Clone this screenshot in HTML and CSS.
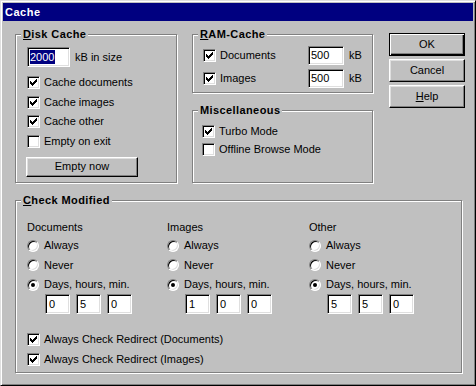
FILE: index.html
```html
<!DOCTYPE html>
<html lang="en">

<head>
    <meta charset="UTF-8">
    <title>Cache</title>
    <link rel="stylesheet" href="styles.css">
</head>

<body>
    <div class="window">
        <div class="titlebar">Cache</div>
        <div class="client">
            <div class="top">
                <div class="group disk">
                    <div class="group-title"><u>D</u>isk Cache</div>
                    <div class="disk-body">
                        <div class="size-row">
                            <div class="field size"><span class="selected">2000</span></div>
                            <span>kB in size</span>
                        </div>
                        <div class="checks">
                            <div class="check"><span class="box"><svg class="tick" viewBox="0 0 7 7"><path d="M6 0h1v1H6zM5 1h2v1H5zM0 2h1v1H0zM4 2h3v1H4zM0 3h2v1H0zM3 3h3v1H3zM0 4h5v1H0zM1 5h3v1H1zM2 6h1v1H2z"/></svg></span>Cache documents</div>
                            <div class="check"><span class="box"><svg class="tick" viewBox="0 0 7 7"><path d="M6 0h1v1H6zM5 1h2v1H5zM0 2h1v1H0zM4 2h3v1H4zM0 3h2v1H0zM3 3h3v1H3zM0 4h5v1H0zM1 5h3v1H1zM2 6h1v1H2z"/></svg></span>Cache images</div>
                            <div class="check"><span class="box"><svg class="tick" viewBox="0 0 7 7"><path d="M6 0h1v1H6zM5 1h2v1H5zM0 2h1v1H0zM4 2h3v1H4zM0 3h2v1H0zM3 3h3v1H3zM0 4h5v1H0zM1 5h3v1H1zM2 6h1v1H2z"/></svg></span>Cache other</div>
                            <div class="check"><span class="box"></span>Empty on exit</div>
                        </div>
                        <div class="btn empty">Empty now</div>
                    </div>
                </div>

                <div class="middle">
                    <div class="group ram">
                        <div class="group-title"><u>R</u>AM-Cache</div>
                        <div class="ram-body">
                            <div class="ram-row">
                                <div class="check ram-label"><span class="box"><svg class="tick" viewBox="0 0 7 7"><path d="M6 0h1v1H6zM5 1h2v1H5zM0 2h1v1H0zM4 2h3v1H4zM0 3h2v1H0zM3 3h3v1H3zM0 4h5v1H0zM1 5h3v1H1zM2 6h1v1H2z"/></svg></span>Documents</div>
                                <div class="field amount">500</div>
                                <span>kB</span>
                            </div>
                            <div class="ram-row">
                                <div class="check ram-label"><span class="box"><svg class="tick" viewBox="0 0 7 7"><path d="M6 0h1v1H6zM5 1h2v1H5zM0 2h1v1H0zM4 2h3v1H4zM0 3h2v1H0zM3 3h3v1H3zM0 4h5v1H0zM1 5h3v1H1zM2 6h1v1H2z"/></svg></span>Images</div>
                                <div class="field amount">500</div>
                                <span>kB</span>
                            </div>
                        </div>
                    </div>

                    <div class="group misc">
                        <div class="group-title">Miscellaneous</div>
                        <div class="misc-body">
                            <div class="check"><span class="box"><svg class="tick" viewBox="0 0 7 7"><path d="M6 0h1v1H6zM5 1h2v1H5zM0 2h1v1H0zM4 2h3v1H4zM0 3h2v1H0zM3 3h3v1H3zM0 4h5v1H0zM1 5h3v1H1zM2 6h1v1H2z"/></svg></span>Turbo Mode</div>
                            <div class="check"><span class="box"></span>Offline Browse Mode</div>
                        </div>
                    </div>
                </div>

                <div class="buttons">
                    <div class="btn default">OK</div>
                    <div class="btn">Cancel</div>
                    <div class="btn"><span><u>H</u>elp</span></div>
                </div>
            </div>

            <div class="group modified">
                <div class="group-title"><u>C</u>heck Modified</div>
                <div class="modified-body">
                    <div class="columns">
                        <div class="col">
                            <div class="col-label">Documents</div>
                            <div class="radios">
                                <div class="radio-row"><span class="radio"></span>Always</div>
                                <div class="radio-row"><span class="radio"></span>Never</div>
                                <div class="radio-row"><span class="radio on"></span>Days, hours, min.</div>
                            </div>
                            <div class="times">
                                <div class="field time">0</div>
                                <div class="field time">5</div>
                                <div class="field time">0</div>
                            </div>
                        </div>
                        <div class="col">
                            <div class="col-label">Images</div>
                            <div class="radios">
                                <div class="radio-row"><span class="radio"></span>Always</div>
                                <div class="radio-row"><span class="radio"></span>Never</div>
                                <div class="radio-row"><span class="radio on"></span>Days, hours, min.</div>
                            </div>
                            <div class="times">
                                <div class="field time">1</div>
                                <div class="field time">0</div>
                                <div class="field time">0</div>
                            </div>
                        </div>
                        <div class="col">
                            <div class="col-label">Other</div>
                            <div class="radios">
                                <div class="radio-row"><span class="radio"></span>Always</div>
                                <div class="radio-row"><span class="radio"></span>Never</div>
                                <div class="radio-row"><span class="radio on"></span>Days, hours, min.</div>
                            </div>
                            <div class="times">
                                <div class="field time">5</div>
                                <div class="field time">5</div>
                                <div class="field time">0</div>
                            </div>
                        </div>
                    </div>
                    <div class="redirects">
                        <div class="check"><span class="box"><svg class="tick" viewBox="0 0 7 7"><path d="M6 0h1v1H6zM5 1h2v1H5zM0 2h1v1H0zM4 2h3v1H4zM0 3h2v1H0zM3 3h3v1H3zM0 4h5v1H0zM1 5h3v1H1zM2 6h1v1H2z"/></svg></span>Always Check Redirect (Documents)</div>
                        <div class="check"><span class="box"><svg class="tick" viewBox="0 0 7 7"><path d="M6 0h1v1H6zM5 1h2v1H5zM0 2h1v1H0zM4 2h3v1H4zM0 3h2v1H0zM3 3h3v1H3zM0 4h5v1H0zM1 5h3v1H1zM2 6h1v1H2z"/></svg></span>Always Check Redirect (Images)</div>
                    </div>
                </div>
            </div>
        </div>
    </div>
</body>

</html>
```

FILE: styles.css
```css
* {
    box-sizing: border-box;
}

body {
    margin: 0;
    font-family: "Liberation Sans", Arial, sans-serif;
    font-size: 11px;
    line-height: 13px;
    color: #000;
    background: #c0c0c0;
}

.window {
    width: 476px;
    height: 386px;
    padding: 2px;
    background: #c0c0c0;
    border: 1px solid;
    border-color: #dfdfdf #000 #000 #dfdfdf;
    box-shadow: inset 1px 1px #fff, inset -1px -1px #808080;
}

.titlebar {
    height: 18px;
    line-height: 18px;
    padding-left: 2px;
    background: #000080;
    color: #fff;
    font-weight: bold;
    letter-spacing: 0.5px;
}

.client {
    padding: 13px 0 0 12px;
}

.top {
    display: flex;
    align-items: flex-start;
}

/* etched group box */
.group {
    border: 1px solid #808080;
    box-shadow: inset 1px 1px #fff, 1px 1px #fff;
}

.group-title {
    display: table;
    height: 13px;
    margin: -7px 0 0 5px;
    padding: 0 2px;
    background: #c0c0c0;
    font-weight: bold;
    letter-spacing: 0.4px;
}

/* sunken edit field */
.field {
    display: flex;
    align-items: center;
    padding-left: 3px;
    background: #fff;
    border: 1px solid;
    border-color: #808080 #fff #fff #808080;
    box-shadow: inset 1px 1px #000, inset -1px -1px #dfdfdf;
}

.selected {
    background: #000080;
    color: #fff;
    padding: 0 1px 0 0;
    line-height: 14px;
}

.check {
    display: flex;
    align-items: center;
    gap: 4px;
    height: 13px;
    white-space: nowrap;
}

.box {
    flex: none;
    width: 13px;
    height: 13px;
    padding: 2px;
    background: #fff;
    border: 1px solid;
    border-color: #808080 #fff #fff #808080;
    box-shadow: inset 1px 1px #000, inset -1px -1px #dfdfdf;
}

.tick {
    display: block;
    width: 7px;
    height: 7px;
    shape-rendering: crispEdges;
}

.radio {
    flex: none;
    display: flex;
    align-items: center;
    justify-content: center;
    width: 12px;
    height: 12px;
    border-radius: 50%;
    background: #fff;
    border: 1px solid;
    border-color: #808080 #fff #fff #808080;
    box-shadow: inset 1px 1px #000, inset -1px -1px #dfdfdf;
}

.radio.on::after {
    content: "";
    width: 4px;
    height: 4px;
    border-radius: 50%;
    background: #000;
}

/* raised push button */
.btn {
    display: flex;
    align-items: center;
    justify-content: center;
    background: #c0c0c0;
    border: 1px solid;
    border-color: #fff #000 #000 #fff;
    box-shadow: inset -1px -1px #808080, inset 1px 1px #dfdfdf;
}

.btn.default {
    border-color: #000;
    box-shadow: inset 1px 1px #fff, inset -1px -1px #000, inset -2px -2px #808080;
}

/* Disk Cache */
.disk {
    width: 162px;
    height: 149px;
}

.disk-body {
    padding: 6px 0 0 11px;
}

.size-row {
    display: flex;
    align-items: center;
    gap: 5px;
}

.field.size {
    width: 43px;
    height: 20px;
    padding-left: 2px;
}

.checks {
    display: flex;
    flex-direction: column;
    gap: 6.6px;
    margin-top: 9px;
}

.btn.empty {
    width: 112px;
    height: 20px;
    margin: 9px 0 0 -1px;
}

/* RAM-Cache and Miscellaneous */
.middle {
    display: flex;
    flex-direction: column;
    margin-left: 15px;
}

.ram {
    width: 181px;
    height: 59px;
}

.ram-body {
    display: flex;
    flex-direction: column;
    gap: 4px;
    padding: 5px 0 0 10px;
}

.ram-row {
    display: flex;
    align-items: center;
    height: 19px;
}

.ram-label {
    width: 105px;
}

.field.amount {
    width: 36px;
    height: 19px;
    padding-left: 2px;
    margin-right: 5px;
}

.misc {
    width: 181px;
    height: 73px;
    margin-top: 17px;
}

.misc-body {
    display: flex;
    flex-direction: column;
    gap: 5px;
    padding: 8px 0 0 9px;
}

/* OK / Cancel / Help */
.buttons {
    display: flex;
    flex-direction: column;
    gap: 3px;
    margin: -1px 0 0 16px;
}

.buttons .btn {
    width: 76px;
    height: 23px;
}

/* Check Modified */
.modified {
    width: 447px;
    height: 173px;
    margin-top: 17px;
}

.modified-body {
    padding: 14px 0 0 11px;
}

.columns {
    display: grid;
    grid-template-columns: 140px 142px 1fr;
}

.col-label {
    height: 13px;
}

.radios {
    display: flex;
    flex-direction: column;
    gap: 6.5px;
    margin-top: 5px;
}

.radio-row {
    display: flex;
    align-items: center;
    gap: 5px;
    height: 13px;
}

.times {
    display: flex;
    gap: 6px;
    margin: 3px 0 0 18px;
}

.field.time {
    width: 25px;
    height: 20px;
}

.redirects {
    display: flex;
    flex-direction: column;
    gap: 7px;
    margin-top: 19px;
}
```
